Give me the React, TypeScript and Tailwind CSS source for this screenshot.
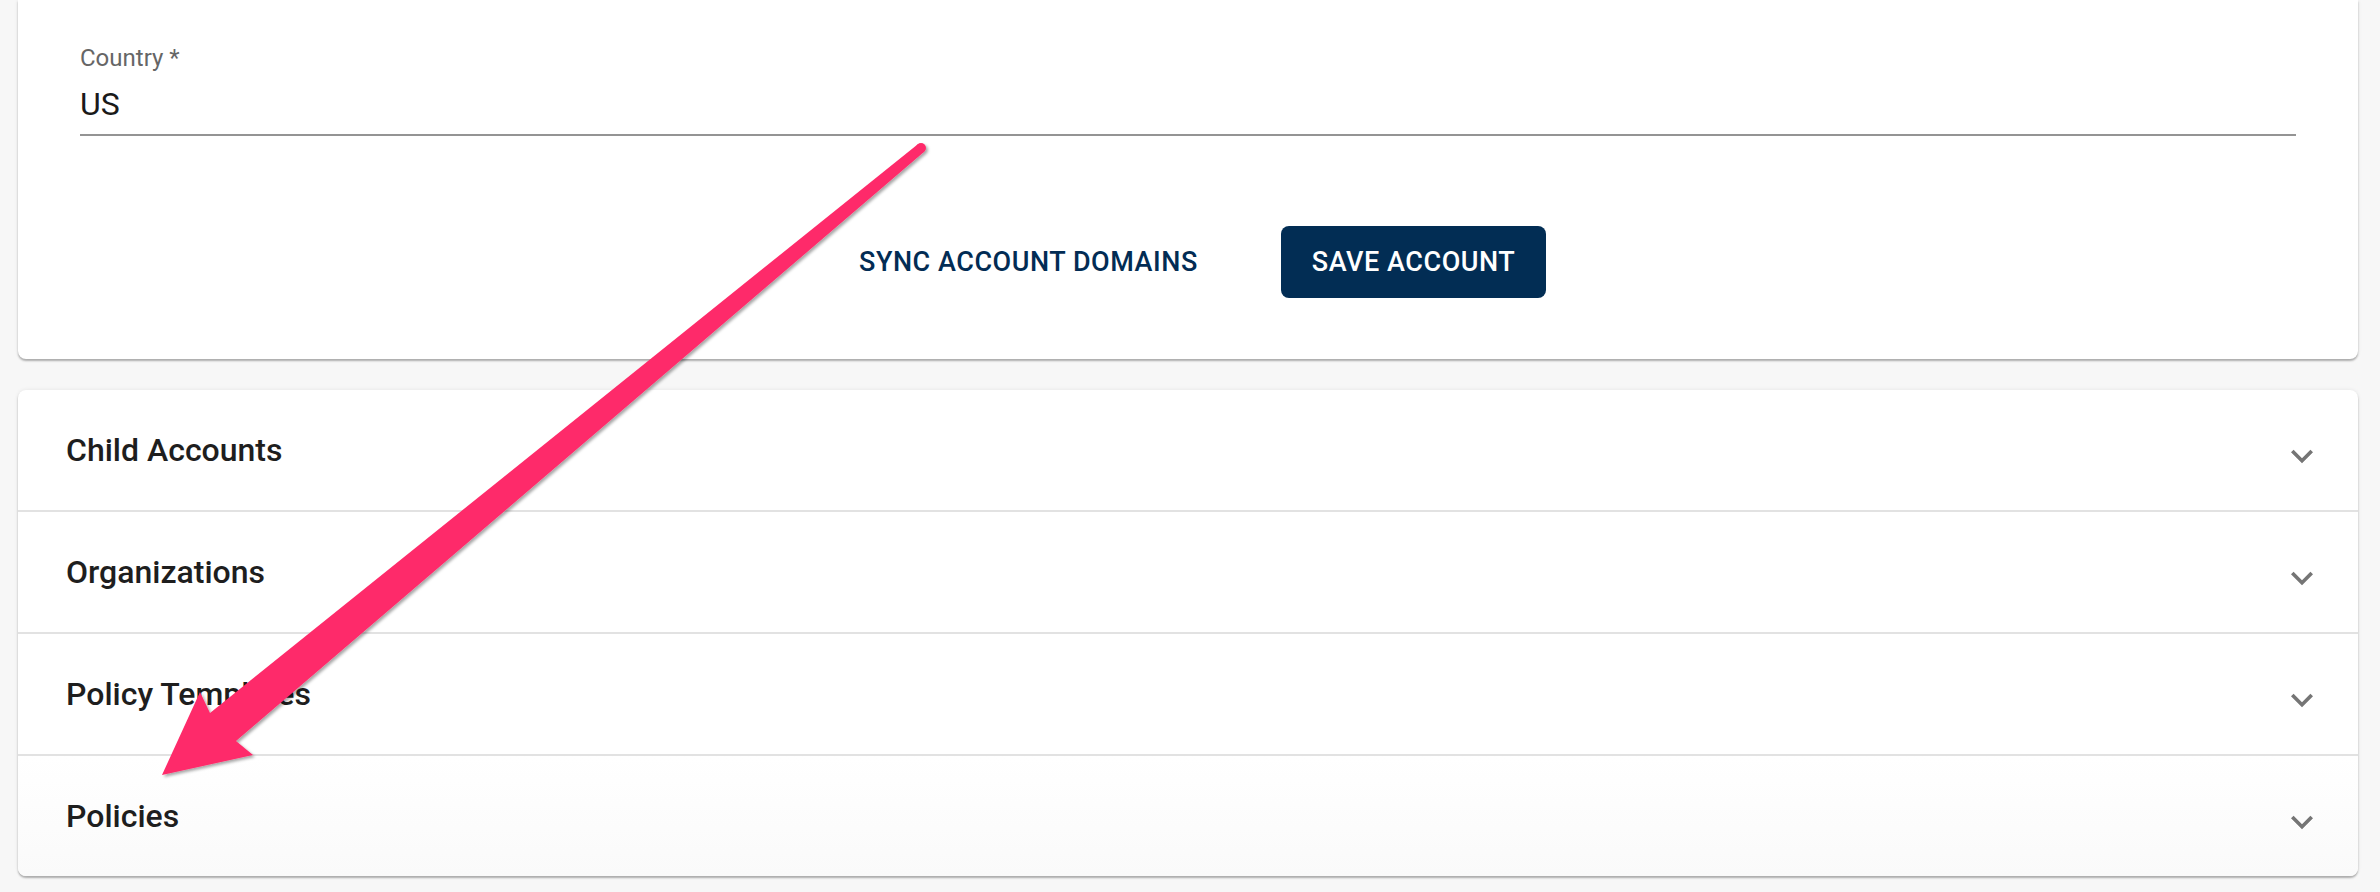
import React from "react";

const sections = ["Child Accounts", "Organizations", "Policy Templates", "Policies"];

const ExpandMore = () => (
  <svg viewBox="0 0 24 24" className="w-[44px] h-[44px] mt-[12px] fill-[#757575]">
    <path d="M16.59 8.59 12 13.17 7.41 8.59 6 10l6 6 6-6z" />
  </svg>
);

const AccordionRow = ({ title, first, last }: { title: string; first: boolean; last: boolean }) => (
  <div
    className={
      "flex items-center justify-between pl-[48px] pr-[34px] " +
      (first ? "h-[120px] " : "h-[122px] border-t-2 border-[#e2e2e2] ") +
      (last ? "bg-gradient-to-b from-white to-[#fafafa]" : "")
    }
  >
    <span className="text-[32px] leading-[32px] font-medium text-[#1e1e1e]">{title}</span>
    <ExpandMore />
  </div>
);

// pink annotation arrow drawn over the page
const Arrow = () => (
  <svg className="absolute inset-0 pointer-events-none" width="2380" height="892" viewBox="0 0 2380 892">
    <defs>
      <filter id="arrowShadow" x="-10%" y="-10%" width="120%" height="120%">
        <feDropShadow dx="2" dy="2" stdDeviation="1.5" floodColor="#000" floodOpacity="0.35" />
      </filter>
    </defs>
    <g fill="#fe2c6a" filter="url(#arrowShadow)">
      <path d="M917.8 144.2 L210 713 L200 692 L162 775 L253 755 L236 741 L924.2 151.8 Z" />
      <circle cx="921" cy="148" r="5" />
    </g>
  </svg>
);

export default function App() {
  return (
    <div className="relative w-[2380px] h-[892px] overflow-hidden bg-[#f7f7f7] font-[Roboto,sans-serif] pl-[18px] pr-[22px]">
      {/* account form card */}
      <div className="bg-white rounded-b-[8px] shadow-[0_2px_2px_rgba(0,0,0,0.28),0_0_4px_rgba(0,0,0,0.08)] px-[62px] pt-[46px] pb-[61px]">
        <div className="text-[24px] leading-[24px] text-[#666666]">Country *</div>
        <div className="mt-[18px] pb-[14px] border-b-2 border-[#949494] text-[32px] leading-[32px] text-[#1a1a1a]">
          US
        </div>
        <div className="flex items-center mt-[90px] pl-[749px] gap-[53px] text-[27px] leading-[27px] font-medium tracking-[0.02em] whitespace-nowrap">
          <button className="h-[72px] px-[30px] flex items-center uppercase text-[#022c54]">Sync Account Domains</button>
          <button className="h-[72px] px-[31px] rounded-[8px] bg-[#022d54] flex items-center uppercase text-white">
            Save Account
          </button>
        </div>
      </div>

      {/* accordion card */}
      <div className="mt-[31px] bg-white rounded-[8px] shadow-[0_2px_2px_rgba(0,0,0,0.28),0_0_4px_rgba(0,0,0,0.08)] overflow-hidden">
        {sections.map((s, i) => (
          <AccordionRow key={s} title={s} first={i === 0} last={i === sections.length - 1} />
        ))}
      </div>

      <Arrow />
    </div>
  );
}
